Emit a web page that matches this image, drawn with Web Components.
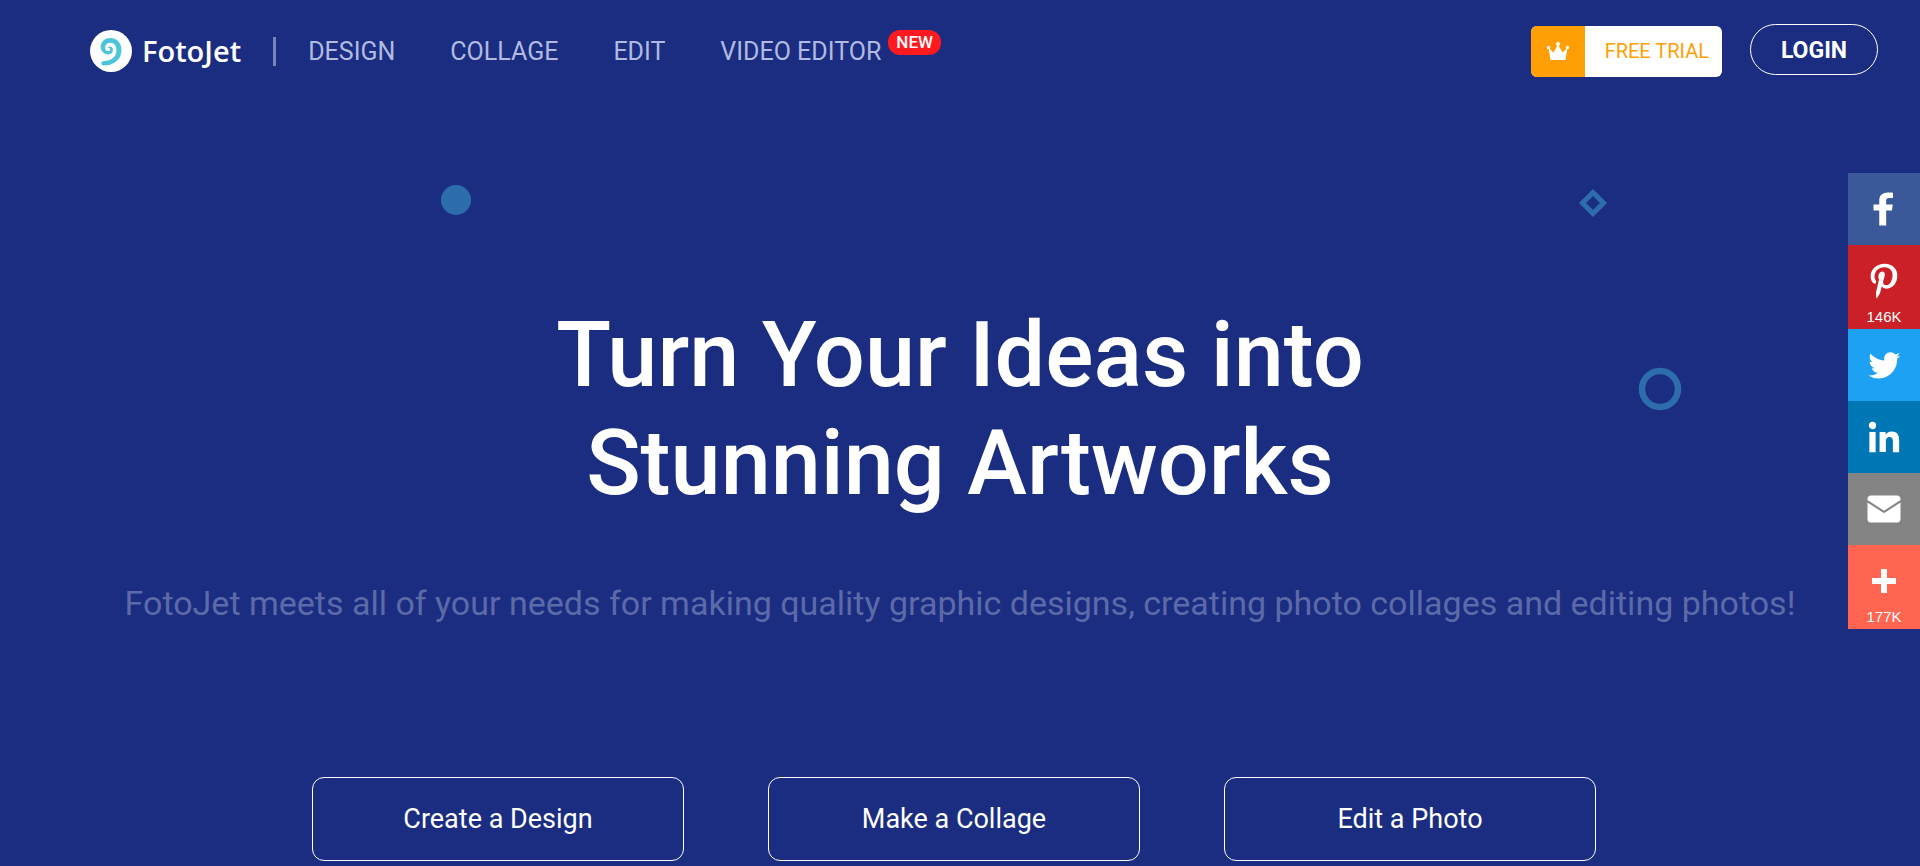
<!DOCTYPE html>
<html lang="en">
<head>
<meta charset="utf-8">
<title>FotoJet</title>
<style>
  body {
    margin: 0;
    background: #1b2d80;
    color: #fff;
    font-family: Roboto, "Liberation Sans", sans-serif;
  }
</style>
</head>
<body>
<fotojet-page></fotojet-page>

<script>
class BrandLogo extends HTMLElement {
  constructor() {
    super();
    this._shadowRoot = this.attachShadow({ mode: 'open' });
  }

  connectedCallback() {
    this._shadowRoot.innerHTML = `
      <style>
        :host { display: block; }
        a {
          display: flex;
          align-items: center;
          gap: 10px;
          color: #fff;
          text-decoration: none;
          font: 600 29px/42px "Open Sans", sans-serif;
        }
        svg { display: block; }
      </style>
      <a href="#">
        <svg width="42" height="42" viewBox="0 0 42 42" aria-hidden="true">
          <circle cx="21" cy="21" r="21" fill="#fff"/>
          <path fill="#4cc4d9" d="M13 31.200C18 31 22 29.500 24.500 26.500C27 23.500 27 18 25 15C22.500 11.800 17.500 12.200 15.700 15.200C14.200 18 15.600 21 18 21.300C19.600 21.400 20.600 20 19.900 18.700C19.500 17.900 18.700 17.600 17.900 17.800C18.800 15.900 21.600 16.200 22.600 18.300C23.800 21.200 21.600 24.400 18.300 24.400C13.800 24.400 10.500 20.700 10.700 16.400C11 11.300 15.300 8 20.500 8C27.200 8 31.500 13 31.500 20C31.500 29.500 24 35.500 13.500 35.500C10.800 35.300 10.600 31.600 13 31.200Z"/>
        </svg>
        <span>FotoJet</span>
      </a>
    `;
  }
}
customElements.define('brand-logo', BrandLogo);

class NavLink extends HTMLElement {
  constructor() {
    super();
    this._shadowRoot = this.attachShadow({ mode: 'open' });
  }

  connectedCallback() {
    const badge = this.getAttribute('badge');
    this._shadowRoot.innerHTML = `
      <style>
        :host { display: block; }
        a {
          display: flex;
          align-items: center;
          gap: 7px;
          color: #b1bae0;
          text-decoration: none;
          font-size: 25px;
          line-height: 32px;
          white-space: nowrap;
        }
        .badge {
          align-self: flex-start;
          margin-top: -6px;
          padding: 0 8px;
          border-radius: 12px;
          background: #ff1a1f;
          color: #fff;
          font-size: 17px;
          font-weight: 500;
          line-height: 25px;
        }
      </style>
      <a href="#"><slot></slot>${badge ? `<span class="badge">${badge}</span>` : ''}</a>
    `;
  }
}
customElements.define('nav-link', NavLink);

class TrialButton extends HTMLElement {
  constructor() {
    super();
    this._shadowRoot = this.attachShadow({ mode: 'open' });
  }

  connectedCallback() {
    this._shadowRoot.innerHTML = `
      <style>
        :host { display: block; }
        button {
          display: flex;
          padding: 0;
          border: 0;
          border-radius: 6px;
          overflow: hidden;
          background: #fff;
          color: #ff9f05;
          font: 400 20px/51px Roboto, sans-serif;
          cursor: pointer;
        }
        .crown {
          display: grid;
          place-items: center;
          width: 54px;
          height: 51px;
          background: #ff9f05;
        }
        .label { padding: 0 13px 0 20px; }
      </style>
      <button type="button">
        <span class="crown">
          <svg width="24" height="20" viewBox="0 0 24 20" fill="#fff" aria-hidden="true">
            <path d="M4.500 19L2.500 6.500L7.500 11.500L12 3.500L16.500 11.500L21.500 6.500L19.500 19Z"/>
            <circle cx="12" cy="3" r="2"/>
            <circle cx="2.500" cy="6.500" r="1.700"/>
            <circle cx="21.500" cy="6.500" r="1.700"/>
          </svg>
        </span>
        <span class="label"><slot></slot></span>
      </button>
    `;
  }
}
customElements.define('trial-button', TrialButton);

class LoginButton extends HTMLElement {
  constructor() {
    super();
    this._shadowRoot = this.attachShadow({ mode: 'open' });
  }

  connectedCallback() {
    this._shadowRoot.innerHTML = `
      <style>
        :host { display: block; padding-bottom: 3px; }
        button {
          display: block;
          width: 128px;
          height: 51px;
          padding: 2px 0 0;
          border: 1px solid #fff;
          border-radius: 26px;
          background: none;
          color: #fff;
          font: 700 23px/28px Roboto, sans-serif;
          cursor: pointer;
        }
      </style>
      <button type="button"><slot></slot></button>
    `;
  }
}
customElements.define('login-button', LoginButton);

class SiteHeader extends HTMLElement {
  constructor() {
    super();
    this._shadowRoot = this.attachShadow({ mode: 'open' });
  }

  connectedCallback() {
    this._shadowRoot.innerHTML = `
      <style>
        :host { display: block; }
        header {
          display: flex;
          align-items: center;
          justify-content: space-between;
          height: 102px;
          padding: 0 42px 0 90px;
          box-sizing: border-box;
        }
        .left, nav, .right { display: flex; align-items: center; }
        .left { gap: 32px; }
        nav { gap: 55px; padding-top: 2px; }
        .line { width: 3px; height: 29px; background: #7884b9; }
        .right { gap: 28px; }
      </style>
      <header>
        <div class="left">
          <brand-logo></brand-logo>
          <span class="line"></span>
          <nav>
            <nav-link>DESIGN</nav-link>
            <nav-link>COLLAGE</nav-link>
            <nav-link>EDIT</nav-link>
            <nav-link badge="NEW">VIDEO EDITOR</nav-link>
          </nav>
        </div>
        <div class="right">
          <trial-button>FREE TRIAL</trial-button>
          <login-button>LOGIN</login-button>
        </div>
      </header>
    `;
  }
}
customElements.define('site-header', SiteHeader);

class ActionButton extends HTMLElement {
  constructor() {
    super();
    this._shadowRoot = this.attachShadow({ mode: 'open' });
  }

  connectedCallback() {
    this._shadowRoot.innerHTML = `
      <style>
        :host { display: block; }
        a {
          display: block;
          border: 1px solid #fff;
          border-radius: 12px;
          color: #fff;
          font-size: 27px;
          line-height: 82px;
          text-align: center;
          text-decoration: none;
        }
      </style>
      <a href="#"><slot></slot></a>
    `;
  }
}
customElements.define('action-button', ActionButton);

class HeroBanner extends HTMLElement {
  constructor() {
    super();
    this._shadowRoot = this.attachShadow({ mode: 'open' });
  }

  connectedCallback() {
    this._shadowRoot.innerHTML = `
      <style>
        :host {
          display: block;
          padding-top: 200px;
          text-align: center;
        }
        h1 {
          margin: 0;
          font-size: 90px;
          font-weight: 500;
          line-height: 108px;
        }
        p {
          margin: 65px 0 0;
          color: #5c6aaa;
          font-size: 34px;
          line-height: 40px;
        }
        .actions {
          display: grid;
          grid-template-columns: repeat(3, 1fr);
          gap: 84px;
          max-width: 1284px;
          margin: 154px auto 0;
          padding: 0 12px 2px 0;
        }
      </style>
      <h1>Turn Your Ideas into<br>Stunning Artworks</h1>
      <p>FotoJet meets all of your needs for making quality graphic designs, creating photo collages and editing photos!</p>
      <div class="actions">
        <action-button>Create a Design</action-button>
        <action-button>Make a Collage</action-button>
        <action-button>Edit a Photo</action-button>
      </div>
    `;
  }
}
customElements.define('hero-banner', HeroBanner);

// Floating outlines behind the hero text
class HeroShapes extends HTMLElement {
  constructor() {
    super();
    this._shadowRoot = this.attachShadow({ mode: 'open' });
  }

  connectedCallback() {
    this._shadowRoot.innerHTML = `
      <style>
        :host { display: block; position: absolute; inset: 0; pointer-events: none; }
        svg { position: absolute; }
        .dot { left: 441px; top: 185px; }
        .diamond { right: 312px; top: 188px; }
        .ring { right: 238px; top: 367px; }
      </style>
      <svg class="dot" width="30" height="30"><circle cx="15" cy="15" r="15" fill="#2e6dac"/></svg>
      <svg class="diamond" width="30" height="30"><path d="M15 4.500L25.500 15L15 25.500L4.500 15Z" fill="none" stroke="#2e6dac" stroke-width="5"/></svg>
      <svg class="ring" width="44" height="44"><circle cx="22" cy="22" r="18" fill="none" stroke="#2e6dac" stroke-width="6.500"/></svg>
    `;
  }
}
customElements.define('hero-shapes', HeroShapes);

class ShareButton extends HTMLElement {
  constructor() {
    super();
    this._shadowRoot = this.attachShadow({ mode: 'open' });
  }

  connectedCallback() {
    const network = this.getAttribute('network');
    const count = this.getAttribute('count');
    this._shadowRoot.innerHTML = `
      <style>
        :host { display: block; }
        button {
          display: block;
          width: 72px;
          height: 72px;
          padding: 0;
          border: 0;
          background: ${this.getColor(network)};
          color: #fff;
          font: 15px/20px "Liberation Sans", Arial, sans-serif;
          cursor: pointer;
        }
        button.counted { height: 84px; padding-top: 10px; }
        svg { display: block; width: 48px; height: 48px; margin: 0 auto; }
        .count { display: block; padding-top: 2px; }
      </style>
      <button type="button" class="${count ? 'counted' : ''}" aria-label="${network}">
        <svg viewBox="0 0 32 32" fill="#fff" aria-hidden="true">${this.getIcon(network)}</svg>
        ${count ? `<span class="count">${count}</span>` : ''}
      </button>
    `;
  }

  getColor(network) {
    const colors = {
      facebook: '#3b5998',
      pinterest: '#cb2027',
      twitter: '#1da1f2',
      linkedin: '#0077b5',
      email: '#848484',
      more: '#ff6550',
    };
    return colors[network];
  }

  getIcon(network) {
    const icons = {
      facebook: '<path d="M22 5.160c-.406-.054-1.806-.16-3.430-.16-3.400 0-5.733 1.825-5.733 5.170v2.882H9v3.913h3.837V27h4.604V16.965h3.823l.587-3.913h-4.410v-2.500c0-1.123.347-1.903 2.198-1.903H22V5.160z"/>',
      pinterest: '<path d="M16.539 4.500c-6.277 0-9.442 4.500-9.442 8.253 0 2.272.86 4.293 2.705 5.046.303.125.574.005.662-.330.061-.231.205-.816.270-1.060.088-.331.053-.447-.191-.736-.532-.627-.873-1.439-.873-2.591 0-3.338 2.498-6.327 6.505-6.327 3.548 0 5.497 2.168 5.497 5.062 0 3.810-1.686 7.025-4.188 7.025-1.382 0-2.416-1.142-2.085-2.545.397-1.674 1.166-3.480 1.166-4.689 0-1.081-.581-1.983-1.782-1.983-1.413 0-2.548 1.462-2.548 3.419 0 1.247.421 2.091.421 2.091l-1.699 7.199c-.505 2.137-.076 4.755-.039 5.019.021.158.223.196.314.077.130-.170 1.813-2.247 2.384-4.324.162-.587.929-3.631.929-3.631.460.876 1.801 1.646 3.227 1.646 4.247 0 7.128-3.871 7.128-9.053.003-3.918-3.317-7.568-8.361-7.568z"/>',
      twitter: '<path transform="translate(2 2) scale(.89)" d="M28 8.557a9.913 9.913 0 0 1-2.828.775 4.930 4.930 0 0 0 2.166-2.725 9.738 9.738 0 0 1-3.130 1.194 4.920 4.920 0 0 0-3.593-1.550 4.924 4.924 0 0 0-4.794 6.049c-4.090-.210-7.720-2.170-10.150-5.150a4.942 4.942 0 0 0-.665 2.477c0 1.710.870 3.214 2.190 4.100a4.968 4.968 0 0 1-2.230-.616v.060c0 2.390 1.700 4.380 3.952 4.830-.414.115-.850.174-1.297.174-.318 0-.626-.030-.928-.086a4.935 4.935 0 0 0 4.600 3.420 9.893 9.893 0 0 1-6.114 2.107c-.398 0-.790-.023-1.175-.068a13.953 13.953 0 0 0 7.550 2.213c9.056 0 14.010-7.507 14.010-14.013 0-.213-.005-.426-.015-.637.960-.695 1.795-1.560 2.455-2.550z"/>',
      linkedin: '<path d="M6.227 12.610h4.190v13.480h-4.190V12.610zm2.095-6.700a2.430 2.430 0 0 1 0 4.860c-1.344 0-2.428-1.090-2.428-2.430s1.084-2.430 2.428-2.430m4.720 6.700h4.020v1.840h.058c.560-1.058 1.927-2.176 3.965-2.176 4.238 0 5.020 2.792 5.020 6.420v7.395h-4.183v-6.560c0-1.564-.030-3.574-2.178-3.574-2.180 0-2.514 1.700-2.514 3.460v6.668h-4.187V12.610z"/>',
      email: '<path d="M27 21.760V11.670l-10.290 6.600c-.430.280-.990.280-1.420 0L5 11.670v11.080c0 1.240 1.010 2.250 2.250 2.250h17.500c1.240 0 2.250-1.010 2.250-2.250v-1zM5 9.250v.750l11 7.100 11-7.100v-.750C27 8.010 25.990 7 24.750 7H7.250C6.010 7 5 8.010 5 9.250z"/>',
      more: '<path d="M14 8h4v16h-4z"/><path d="M8 14h16v4H8z"/>',
    };
    return icons[network];
  }
}
customElements.define('share-button', ShareButton);

class ShareBar extends HTMLElement {
  constructor() {
    super();
    this._shadowRoot = this.attachShadow({ mode: 'open' });
  }

  connectedCallback() {
    this._shadowRoot.innerHTML = `
      <style>
        :host {
          display: flex;
          flex-direction: column;
          position: fixed;
          top: 20vh;
          right: 0;
        }
      </style>
      <share-button network="facebook"></share-button>
      <share-button network="pinterest" count="146K"></share-button>
      <share-button network="twitter"></share-button>
      <share-button network="linkedin"></share-button>
      <share-button network="email"></share-button>
      <share-button network="more" count="177K"></share-button>
    `;
  }
}
customElements.define('share-bar', ShareBar);

class FotojetPage extends HTMLElement {
  constructor() {
    super();
    this._shadowRoot = this.attachShadow({ mode: 'open' });
  }

  connectedCallback() {
    this._shadowRoot.innerHTML = `
      <style>
        :host { display: block; position: relative; }
      </style>
      <site-header></site-header>
      <main>
        <hero-shapes></hero-shapes>
        <hero-banner></hero-banner>
      </main>
      <share-bar></share-bar>
    `;
  }
}
customElements.define('fotojet-page', FotojetPage);
</script>
</body>
</html>
